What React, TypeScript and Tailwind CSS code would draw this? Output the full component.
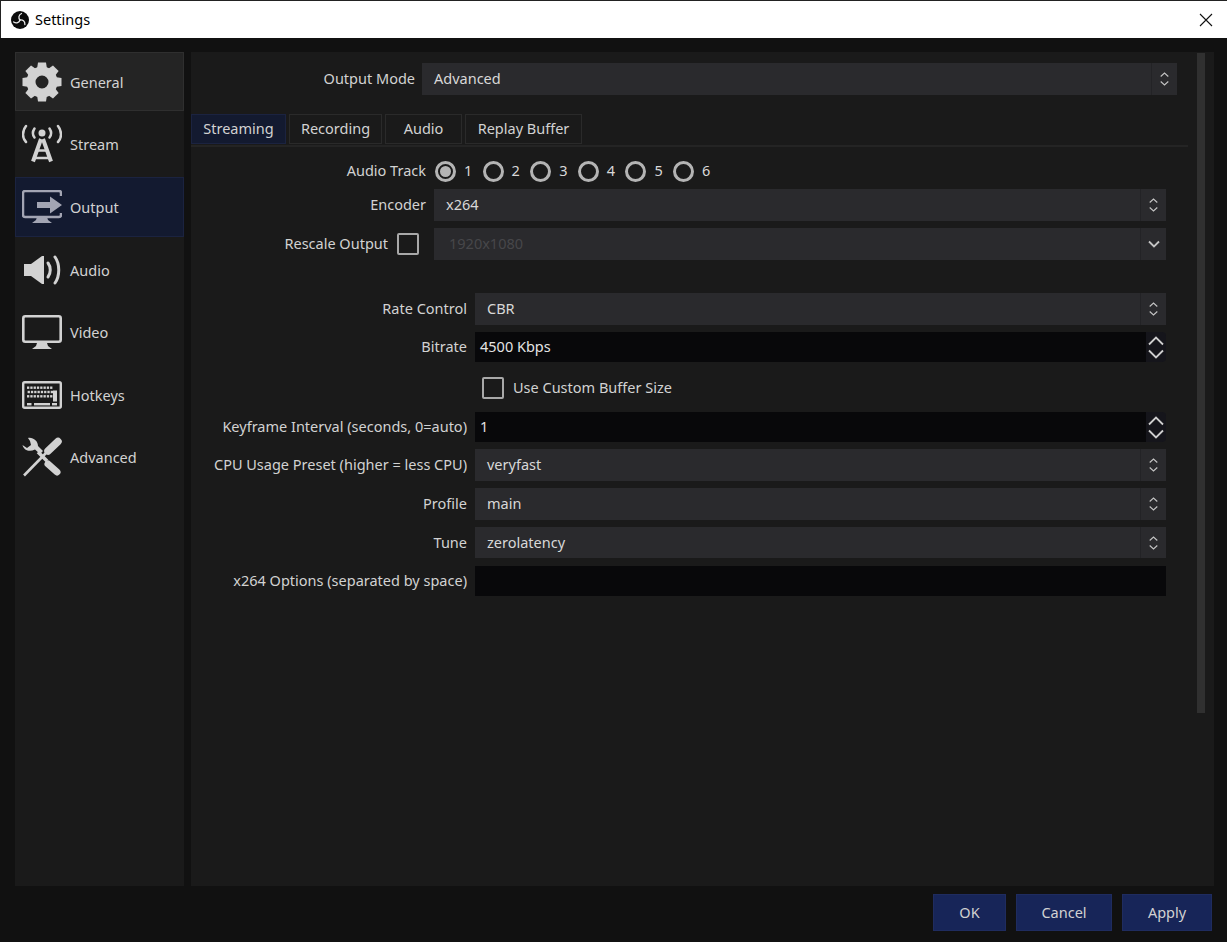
import type { ReactNode } from "react";

const ICON = "#d2d2d2";

function ObsLogo() {
  return (
    <svg width="18" height="18" viewBox="0 0 18 18">
      <circle cx="9" cy="9" r="9" fill="#0c0c0c" />
      <g fill="none" stroke="#e8e8e8" strokeWidth="1.300" strokeLinecap="round">
        <path d="M9 9C7.200 7 7.500 4 10.500 2.500" />
        <path d="M9 9C7.200 7 7.500 4 10.500 2.500" transform="rotate(120 9 9)" />
        <path d="M9 9C7.200 7 7.500 4 10.500 2.500" transform="rotate(240 9 9)" />
      </g>
    </svg>
  );
}

function GearIcon() {
  return (
    <svg width="40" height="40" viewBox="0 0 40 40">
      {[0, 45, 90, 135, 180, 225, 270, 315].map((a) => (
        <path key={a} d="M15 7l1-6.500h8l1 6.500z" fill={ICON} transform={`rotate(${a} 20 20)`} />
      ))}
      <circle cx="20" cy="20" r="11" fill="none" stroke={ICON} strokeWidth="9" />
    </svg>
  );
}

function StreamIcon() {
  return (
    <svg width="40" height="40" viewBox="0 0 40 40" fill="none" stroke={ICON}>
      <circle cx="20" cy="9" r="3.500" fill={ICON} stroke="none" />
      <g strokeWidth="2.500" strokeLinecap="round">
        <path d="M12.500 4.500c-2 3-2 6.500 0 9" />
        <path d="M27.500 4.500c2 3 2 6.500 0 9" />
        <path d="M4 2c-4 5-4 12 0 16" />
        <path d="M36 2c4 5 4 12 0 16" />
      </g>
      <path d="M19 15L11 37.500M21 15l8 22.500" strokeWidth="4" />
      <path d="M14 26.500h12M11 34h18" strokeWidth="2.500" />
    </svg>
  );
}

function OutputIcon() {
  return (
    <svg width="40" height="34" viewBox="0 0 40 34" fill="none">
      <path d="M39 6V3a2 2 0 0 0-2-2H3a2 2 0 0 0-2 2v22a2 2 0 0 0 2 2h34a2 2 0 0 0 2-2v-2" stroke="#a3a5b3" strokeWidth="2.500" />
      <path d="M15 12h13V6.500l12 8.500-12 8.500V18H15z" fill="#a3a5b3" />
      <path d="M15 27h10l1 3 4 3H10l4-3z" fill="#a3a5b3" />
    </svg>
  );
}

function AudioIcon() {
  return (
    <svg width="38" height="30" viewBox="0 0 38 30" fill="none">
      <path d="M1 9h7l11-8h2v28h-2L8 21H1z" fill={ICON} />
      <path d="M25 8c3 4 3 10 0 14" stroke={ICON} strokeWidth="3" strokeLinecap="round" />
      <path d="M32 2c5 7 5 19 0 26" stroke={ICON} strokeWidth="3" strokeLinecap="round" />
    </svg>
  );
}

function VideoIcon() {
  return (
    <svg width="40" height="34" viewBox="0 0 40 34" fill="none">
      <rect x="1.300" y="1.300" width="37.400" height="25.400" rx="2" stroke={ICON} strokeWidth="2.600" />
      <path d="M15 28h10l1 3 4 3H10l4-3z" fill={ICON} />
    </svg>
  );
}

function HotkeysIcon() {
  const keys: ReactNode[] = [];
  [0, 1, 2].forEach((row) => {
    for (let i = 0; i < 8; i++) {
      keys.push(<rect key={`${row}-${i}`} x={5 + i * 3.300 + (row === 1 ? 0.600 : 0)} y={5.500 + row * 4.300} width="2.300" height="2.400" fill={ICON} />);
    }
  });
  return (
    <svg width="40" height="28" viewBox="0 0 40 28" fill="none">
      <rect x="1.200" y="1.200" width="37.600" height="25.600" rx="1.500" stroke={ICON} strokeWidth="2.400" />
      {keys}
      <rect x="31" y="9.500" width="4" height="11" fill={ICON} />
      <rect x="5" y="22" width="4.500" height="2.400" fill={ICON} />
      <rect x="12" y="22" width="16" height="2.400" fill={ICON} />
      <rect x="30" y="22" width="5" height="2.400" fill={ICON} />
    </svg>
  );
}

function ToolsIcon() {
  return (
    <svg width="40" height="40" viewBox="0 0 40 40" fill="none">
      <path d="M6 1C11 0 16 4 16 9l5 5-3 3-5-4.500C8 15 2 14 .500 8L5 11l4-3-1-4z" fill={ICON} />
      <path d="M16 15l9 9" stroke={ICON} strokeWidth="3.500" />
      <path d="M26 27l9 8" stroke={ICON} strokeWidth="7" strokeLinecap="round" />
      <path d="M36 4.500L26 14" stroke={ICON} strokeWidth="7.500" strokeLinecap="round" />
      <path d="M24 16L2 38.500" stroke={ICON} strokeWidth="2.600" />
    </svg>
  );
}

function ComboArrows() {
  return (
    <div className="flex h-full w-[26px] flex-col items-center justify-center gap-[4px] border-l border-[#232326]">
      <svg width="9" height="5" viewBox="0 0 9 5" fill="none">
        <path d="M.7 4.500l3.800-3.500 3.800 3.500" stroke="#c4c4c4" strokeWidth="1.100" />
      </svg>
      <svg width="9" height="5" viewBox="0 0 9 5" fill="none">
        <path d="M.7.500l3.800 3.500L8.300.500" stroke="#c4c4c4" strokeWidth="1.100" />
      </svg>
    </div>
  );
}

function Combo({ value, height = "h-[32px]" }: { value: string; height?: string }) {
  return (
    <div className={`flex flex-1 items-center justify-between bg-[#2a2a2d] pl-[12px] ${height} text-[#d8d8d8]`}>
      <span>{value}</span>
      <ComboArrows />
    </div>
  );
}

function Spin({ value }: { value: string }) {
  return (
    <div className="flex h-[30px] flex-1 items-center">
      <div className="flex h-full flex-1 items-center bg-[#08080a] pl-[5px] text-[#e4e4e4]">{value}</div>
      <div className="flex h-full w-[20px] flex-col items-center justify-center gap-[3px] rounded-r bg-[#15151b]">
        <svg width="16" height="10" viewBox="0 0 16 10" fill="none">
          <path d="M1 8.500l7-7 7 7" stroke="#cfcfcf" strokeWidth="1.800" />
        </svg>
        <svg width="16" height="10" viewBox="0 0 16 10" fill="none">
          <path d="M1 1.500l7 7 7-7" stroke="#cfcfcf" strokeWidth="1.800" />
        </svg>
      </div>
    </div>
  );
}

function Check() {
  return <div className="h-[22px] w-[22px] rounded-[2px] border-2 border-[#a8a8a8]" />;
}

function Radio({ n, on }: { n: number; on?: boolean }) {
  return (
    <div className="flex w-[47.6px] items-center">
      <div className="flex h-[21px] w-[21px] items-center justify-center rounded-full border-[3px] border-[#b4b4b4]">
        {on && <div className="h-[11px] w-[11px] rounded-full bg-[#b4b4b4]" />}
      </div>
      <span className="ml-[8px] text-[#d8d8d8]">{n}</span>
    </div>
  );
}

function Row({ label, children, top }: { label: string; children: ReactNode; top: string }) {
  return (
    <div className={`flex items-center ${top}`}>
      <div className="w-[276px] whitespace-nowrap text-right">{label}</div>
      <div className="ml-[8px] flex flex-1 items-center">{children}</div>
    </div>
  );
}

const navItems = [
  { label: "General", icon: <GearIcon />, row: "h-[59px] bg-[#242424] border border-[#2f2f2f]" },
  { label: "Stream", icon: <StreamIcon />, row: "h-[66px] border border-transparent" },
  { label: "Output", icon: <OutputIcon />, row: "h-[60px] bg-[#131a30] border border-[#1b2340]" },
  { label: "Audio", icon: <AudioIcon />, row: "h-[63px] pt-[2px] border border-transparent" },
  { label: "Video", icon: <VideoIcon />, row: "h-[62px] pt-[2px] border border-transparent" },
  { label: "Hotkeys", icon: <HotkeysIcon />, row: "h-[63px] pt-[2px] border border-transparent" },
  { label: "Advanced", icon: <ToolsIcon />, row: "h-[62px] pt-[2px] border border-transparent" },
];

const tabs = [
  { label: "Streaming", cls: "w-[95px] bg-[#131a30] border-[#1b2340]" },
  { label: "Recording", cls: "w-[93px] border-[#2a2a2a]" },
  { label: "Audio", cls: "w-[77px] border-[#2a2a2a]" },
  { label: "Replay Buffer", cls: "w-[117px] border-[#2a2a2a]" },
];

const buttons = [
  { label: "OK", cls: "w-[73px]" },
  { label: "Cancel", cls: "w-[96px]" },
  { label: "Apply", cls: "w-[90px]" },
];

export default function App() {
  return (
    <div className="flex h-[942px] w-[1227px] flex-col overflow-hidden bg-[#111111] text-[14.5px] text-[#d2d2d2] [font-family:'Noto_Sans',sans-serif]">
      {/* title bar */}
      <div className="flex h-[38px] shrink-0 items-center border-l border-t border-[#222] bg-white pl-[10px] pr-[14px] text-black">
        <ObsLogo />
        <span className="ml-[6px] flex-1">Settings</span>
        <svg width="14" height="14" viewBox="0 0 14 14" stroke="#111" strokeWidth="1.100">
          <path d="M1 1l12 12M13 1L1 13" />
        </svg>
      </div>

      <div className="flex flex-1 gap-[7px] pl-[15px] pr-[13px] pt-[14px]">
        {/* sidebar */}
        <div className="flex w-[169px] flex-col bg-[#1a1a1a]">
          {navItems.map((item) => (
            <div key={item.label} className={`flex items-center ${item.row}`}>
              <div className="flex w-[54px] shrink-0 justify-center pr-[2px]">{item.icon}</div>
              <span className="mt-[2px]">{item.label}</span>
            </div>
          ))}
        </div>

        {/* settings panel */}
        <div className="flex flex-1 bg-[#1a1a1a]">
          <div className="w-[1006px] pt-[11px]">
            <div className="flex items-center">
              <div className="w-[224px] text-right">Output Mode</div>
              <div className="ml-[7px] flex w-[755px]">
                <Combo value="Advanced" />
              </div>
            </div>

            <div className="mt-[19px] flex w-[997px] gap-[3px] border-b-2 border-[#242424] pb-[1px]">
              {tabs.map((t) => (
                <div key={t.label} className={`flex h-[30px] items-center justify-center border ${t.cls}`}>
                  {t.label}
                </div>
              ))}
            </div>

            <div className="w-[975px]">
              <div className="mt-[9px] flex h-[30px] items-center">
                <div className="w-[235px] text-right">Audio Track</div>
                <div className="ml-[9px] flex">
                  {[1, 2, 3, 4, 5, 6].map((n) => (
                    <Radio key={n} n={n} on={n === 1} />
                  ))}
                </div>
              </div>

              <div className="mt-[3px] flex items-center">
                <div className="w-[235px] text-right">Encoder</div>
                <div className="ml-[8px] flex flex-1">
                  <Combo value="x264" />
                </div>
              </div>

              <div className="mt-[7px] flex items-center">
                <div className="w-[197px] text-right">Rescale Output</div>
                <div className="ml-[9px]">
                  <Check />
                </div>
                <div className="ml-[15px] flex h-[32px] flex-1 items-center justify-between bg-[#2a2a2d] pl-[15px] text-[#47474a]">
                  <span>1920x1080</span>
                  <div className="flex h-full w-[26px] items-center justify-center border-l border-[#232326]">
                    <svg width="12" height="8" viewBox="0 0 12 8" fill="none">
                      <path d="M1 1.500l5 5 5-5" stroke="#c4c4c4" strokeWidth="1.800" />
                    </svg>
                  </div>
                </div>
              </div>

              <Row label="Rate Control" top="mt-[33px]">
                <Combo value="CBR" />
              </Row>
              <Row label="Bitrate" top="mt-[7px]">
                <Spin value="4500 Kbps" />
              </Row>
              <div className="mt-[15px] flex h-[22px] items-center pl-[291px]">
                <Check />
                <span className="ml-[9px]">Use Custom Buffer Size</span>
              </div>
              <Row label="Keyframe Interval (seconds, 0=auto)" top="mt-[13px]">
                <Spin value="1" />
              </Row>
              <Row label="CPU Usage Preset (higher = less CPU)" top="mt-[7px]">
                <Combo value="veryfast" />
              </Row>
              <Row label="Profile" top="mt-[7px]">
                <Combo value="main" />
              </Row>
              <Row label="Tune" top="mt-[7px]">
                <Combo value="zerolatency" height="h-[31px]" />
              </Row>
              <Row label="x264 Options (separated by space)" top="mt-[8px]">
                <div className="h-[30px] flex-1 bg-[#08080a]" />
              </Row>
            </div>
          </div>

          <div className="mt-px h-[660px] w-[8px] bg-[#303030]" />
        </div>
      </div>

      {/* footer buttons */}
      <div className="flex h-[56px] shrink-0 justify-end gap-[10px] pr-[15px] pt-[8px]">
        {buttons.map((b) => (
          <div key={b.label} className={`flex h-[37px] items-center justify-center border border-[#1f2c5f] bg-[#172558] ${b.cls}`}>
            {b.label}
          </div>
        ))}
      </div>
    </div>
  );
}
